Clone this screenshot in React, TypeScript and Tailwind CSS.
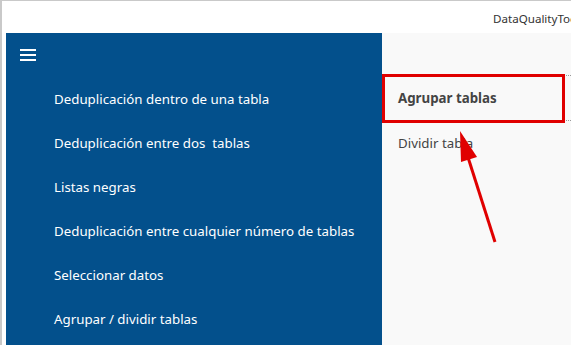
import React from "react";

const items = [
  "Deduplicación dentro de una tabla",
  "Deduplicación entre dos  tablas",
  "Listas negras",
  "Deduplicación entre cualquier número de tablas",
  "Seleccionar datos",
  "Agrupar / dividir tablas",
];

export default function App() {
  const font = { fontFamily: '"Segoe UI", "Noto Sans", "Open Sans", sans-serif' };
  return (
    <div
      className="relative w-[571px] h-[345px] overflow-hidden bg-white border-t border-l-2 border-[#c9c9c9]"
      style={font}
    >
      <div className="h-[32px] flex items-center justify-start overflow-hidden">
        <span className="whitespace-pre text-[11.6px] text-[#333] pl-[491px] pt-[4px]">DataQualityTools</span>
      </div>
      <div className="flex h-[312px] pl-[4px]">
        <div className="w-[376px] bg-[#03508c] text-white">
          <div className="h-[44px] flex items-center pl-[14px]">
            <div className="flex flex-col gap-[3px] w-[16px]">
              <div className="h-[2px] bg-white" />
              <div className="h-[2px] bg-white" />
              <div className="h-[2px] bg-white" />
            </div>
          </div>
          {items.map((t) => (
            <div key={t} className="h-[44px] flex items-center pl-[48px] pt-[2px] text-[13.3px] whitespace-pre">
              {t}
            </div>
          ))}
        </div>
        <div className="flex-1 bg-[#f9f9f9] text-[#444] text-[13.3px]">
          <div className="h-[42px]" />
          <div className="h-[46px] flex items-center pl-[16px] pt-[2px] font-bold border-y border-dotted border-[#999]">
            Agrupar tablas
          </div>
          <div className="h-[44px] flex items-center pl-[16px] pt-[2px]">Dividir tabla</div>
        </div>
      </div>
      <div className="absolute left-[380px] top-[73px] w-[183px] h-[49px] border-[3px] border-[#e00000]" />
      <svg className="absolute left-0 top-0" width="571" height="345" viewBox="0 0 571 345">
        <line x1="493" y1="241" x2="464" y2="150" stroke="#e00000" strokeWidth="3" />
        <polygon points="458,130 459,161 475,156" fill="#e00000" />
      </svg>
    </div>
  );
}
